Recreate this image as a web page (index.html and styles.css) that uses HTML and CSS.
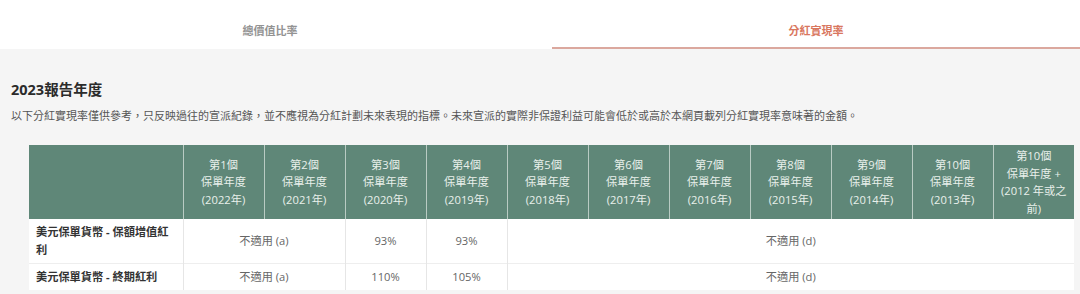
FILE: index.html
```html
<!DOCTYPE html>
<html lang="zh-Hant">
<head>
<meta charset="utf-8">
<title>分紅實現率</title>
<link rel="stylesheet" href="styles.css">
</head>
<body>
<div class="tabs">
  <div class="tab">總價值比率</div>
  <div class="tab tab-active">分紅實現率</div>
</div>
<div class="content">
  <h2 class="title">2023報告年度</h2>
  <p class="note">以下分紅實現率僅供參考，只反映過往的宣派紀錄，並不應視為分紅計劃未來表現的指標。未來宣派的實際非保證利益可能會低於或高於本網頁載列分紅實現率意味著的金額。</p>
  <table class="rates">
    <colgroup>
      <col class="col-label">
      <col class="col-year"><col class="col-year"><col class="col-year"><col class="col-year"><col class="col-year"><col class="col-year"><col class="col-year"><col class="col-year"><col class="col-year"><col class="col-year"><col class="col-year">
    </colgroup>
    <thead>
      <tr>
        <th></th>
        <th>第1個<br>保單年度<br>(2022年)</th>
        <th>第2個<br>保單年度<br>(2021年)</th>
        <th>第3個<br>保單年度<br>(2020年)</th>
        <th>第4個<br>保單年度<br>(2019年)</th>
        <th>第5個<br>保單年度<br>(2018年)</th>
        <th>第6個<br>保單年度<br>(2017年)</th>
        <th>第7個<br>保單年度<br>(2016年)</th>
        <th>第8個<br>保單年度<br>(2015年)</th>
        <th>第9個<br>保單年度<br>(2014年)</th>
        <th>第10個<br>保單年度<br>(2013年)</th>
        <th>第10個<br>保單年度 +<br>(2012 年或之前)</th>
      </tr>
    </thead>
    <tbody>
      <tr class="row-tall">
        <td class="label">美元保單貨幣 - 保額增值紅利</td>
        <td colspan="2">不適用 (a)</td>
        <td>93%</td>
        <td>93%</td>
        <td colspan="7">不適用 (d)</td>
      </tr>
      <tr>
        <td class="label">美元保單貨幣 - 終期紅利</td>
        <td colspan="2">不適用 (a)</td>
        <td>110%</td>
        <td>105%</td>
        <td colspan="7">不適用 (d)</td>
      </tr>
    </tbody>
  </table>
</div>
</body>
</html>
```
FILE: styles.css
```css
html, body {
  margin: 0;
  padding: 0;
}
body {
  font-family: "Open Sans", "Noto Sans CJK TC", sans-serif;
  background: #f5f5f5;
  color: #333;
}
.tabs {
  display: flex;
  height: 49px;
  background: #ffffff;
}
.tab {
  flex: 0 0 540px;
  box-sizing: border-box;
  text-align: center;
  font-size: 11px;
  font-weight: 600;
  color: #939393;
  padding-top: 22px;
  line-height: 18px;
}
.tab-active {
  flex: 1 1 auto;
  margin-left: 12px;
  color: #d9775f;
  border-bottom: 2px solid #dba89e;
}
.content {
  padding: 31px 6px 10px 11px;
}
.title {
  margin: 0;
  font-size: 14.5px;
  line-height: 20px;
  font-weight: 700;
  color: #2b2b2b;
}
.note {
  margin: 7px 0 0 0;
  font-size: 11px;
  line-height: 18px;
  color: #555;
}
.rates {
  margin: 20px 0 0 18px;
  border-collapse: collapse;
  table-layout: fixed;
  width: 1045px;
  background: #ffffff;
  font-size: 11.2px;
}
.col-label { width: 154px; }
.col-year { width: 81px; }
.rates th {
  background: #5f8778;
  color: #e9f0eb;
  font-weight: 400;
  line-height: 17.5px;
  padding: 2px 7px;
  height: 70px;
  text-align: center;
  vertical-align: middle;
  border-left: 1px solid #b9cbc3;
}
.rates th:first-child {
  border-left: none;
}
.rates td {
  text-align: center;
  vertical-align: middle;
  color: #666;
  line-height: 18px;
  padding: 4px 7px;
  border-left: 1px solid #e6e6e6;
  border-top: 1px solid #eeeeee;
}
.rates tbody tr:first-child td {
  border-top: none;
}
.rates td.label {
  text-align: left;
  font-weight: 700;
  color: #333;
  border-left: none;
}
.row-tall td {
  height: 36px;
}
```
